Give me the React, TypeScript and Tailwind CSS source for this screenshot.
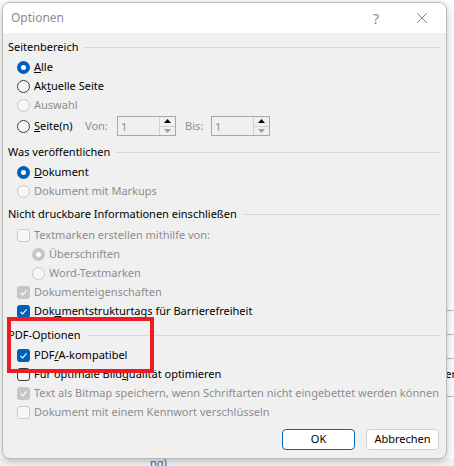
import type React from "react"

const font = { fontFamily: '"Noto Sans", "Open Sans", sans-serif' }

function Check() {
  return (
    <svg viewBox="0 0 13 13" className="h-[13px] w-[13px]">
      <path d="M3.5 6.8 L5.6 8.9 L9.6 4.4" fill="none" stroke="white" strokeWidth="1.1" />
    </svg>
  )
}

function Radio({ checked, disabled }: { checked?: boolean; disabled?: boolean }) {
  if (checked && !disabled)
    return (
      <span className="flex h-[13px] w-[13px] items-center justify-center rounded-full bg-[#005fb8]">
        <span className="h-[5px] w-[5px] rounded-full bg-white" />
      </span>
    )
  if (checked)
    return (
      <span className="flex h-[13px] w-[13px] items-center justify-center rounded-full bg-[#c6c6c6]">
        <span className="h-[5px] w-[5px] rounded-full bg-white" />
      </span>
    )
  return (
    <span
      className={`h-[13px] w-[13px] rounded-full border bg-[#f7f7f7] ${
        disabled ? "border-[#c9c9c9]" : "border-[#3a3a3a]"
      }`}
    />
  )
}

function Box({ checked, disabled }: { checked?: boolean; disabled?: boolean }) {
  if (checked)
    return (
      <span className={`flex h-[13px] w-[13px] rounded-[3px] ${disabled ? "bg-[#c6c6c6]" : "bg-[#005fb8]"}`}>
        <Check />
      </span>
    )
  return (
    <span
      className={`h-[13px] w-[13px] rounded-[3px] border bg-[#f7f7f7] ${
        disabled ? "border-[#c9c9c9]" : "border-[#3a3a3a]"
      }`}
    />
  )
}

function Row({
  kind,
  checked,
  disabled,
  indent,
  children,
}: {
  kind: "radio" | "box"
  checked?: boolean
  disabled?: boolean
  indent?: boolean
  children: React.ReactNode
}) {
  return (
    <div className={`flex h-[19px] items-center gap-[4px] ${indent ? "pl-[24px]" : "pl-[9px]"}`}>
      {kind === "radio" ? <Radio checked={checked} disabled={disabled} /> : <Box checked={checked} disabled={disabled} />}
      <span className={`whitespace-nowrap ${disabled ? "text-[#8d8d8d]" : "text-black"}`}>{children}</span>
    </div>
  )
}

function Group({ title, className }: { title: string; className?: string }) {
  return (
    <div className={`flex h-[18px] items-center ${className ?? ""}`}>
      <span className="whitespace-nowrap text-black">{title}</span>
      <span className="ml-[6px] h-px flex-1 bg-[#d9d9d9]" />
    </div>
  )
}

function Spin() {
  return (
    <div className="flex h-[20px] w-[59px] border border-[#a8a8a8] bg-[#f0f0f0]">
      <span className="flex-1 pl-[3px] pt-[2px] text-[#8d8d8d]">1</span>
      <div className="flex w-[16px] flex-col border-l border-[#d0d0d0]">
        <span className="flex flex-1 items-center justify-center border-b border-[#d0d0d0]">
          <svg viewBox="0 0 7 4" className="h-[4px] w-[7px]">
            <path d="M0 4 L3.5 0 L7 4Z" fill="#000" />
          </svg>
        </span>
        <span className="flex flex-1 items-center justify-center">
          <svg viewBox="0 0 7 4" className="h-[4px] w-[7px]">
            <path d="M0 0 L3.5 4 L7 0Z" fill="#a0a0a0" />
          </svg>
        </span>
      </div>
    </div>
  )
}

export default function App() {
  return (
    <div className="relative h-[466px] w-[454px] overflow-hidden bg-white text-[11px]" style={font}>
      {/* Word window behind */}
      <div className="absolute right-0 top-[310px] h-px w-[10px] bg-[#bdbdbd]" />
      <div className="absolute right-0 top-[334px] h-px w-[10px] bg-[#bdbdbd]" />
      <div className="absolute right-0 top-[358px] h-px w-[10px] bg-[#bdbdbd]" />
      <div className="absolute right-0 top-[396px] h-px w-[10px] bg-[#bdbdbd]" />
      <span className="absolute right-[-2px] top-[366px] text-black">er</span>
      <div className="absolute bottom-0 left-0 h-[8px] w-full bg-[#f3f3f3]" />
      <span className="absolute left-[150px] top-[455px] text-[#2b61b8]">ng)</span>

      <div className="relative pl-[2px] pt-[2px]">
        <div className="flex h-[457px] w-[445px] flex-col overflow-hidden rounded-[8px] border border-[#b9b9b9] bg-[#f0f0f0] shadow-[0_2px_8px_rgba(0,0,0,0.25)]">
          {/* title bar */}
          <div className="flex h-[30px] items-center bg-white pl-[8px]">
            <span className="flex-1 text-[12px] text-[#8c8c8c]">Optionen</span>
            <span className="mr-[38px] text-[14px] text-[#8c8c8c]">?</span>
            <svg viewBox="0 0 10 10" className="mr-[19px] h-[10px] w-[10px]">
              <path d="M0 0 L10 10 M10 0 L0 10" stroke="#8c8c8c" strokeWidth="1" />
            </svg>
          </div>

          <div className="flex flex-1 flex-col pl-[5px] pr-[6px] pt-[5px]">
            <Group title="Seitenbereich" />
            <div className="mt-[2px]">
              <Row kind="radio" checked>
                <u>A</u>lle
              </Row>
              <Row kind="radio">
                Ak<u>t</u>uelle Seite
              </Row>
              <Row kind="radio" disabled>
                Auswahl
              </Row>
              <div className="flex h-[22px] items-center pl-[9px]">
                <Radio />
                <span className="ml-[4px] w-[51px]">
                  <u>S</u>eite(n)
                </span>
                <span className="w-[32px] text-[#8d8d8d]">Von:</span>
                <Spin />
                <span className="ml-[9px] w-[26px] text-[#8d8d8d]">Bis:</span>
                <Spin />
              </div>
            </div>

            <Group title="Was veröffentlichen" className="mt-[6px]" />
            <div className="mt-[2px]">
              <Row kind="radio" checked>
                <u>D</u>okument
              </Row>
              <Row kind="radio" disabled>
                Dokument mit Markups
              </Row>
            </div>

            <Group title="Nicht druckbare Informationen einschließen" className="mt-[4px]" />
            <div className="mt-[3px]">
              <Row kind="box" disabled>
                Textmarken erstellen mithilfe von:
              </Row>
              <Row kind="radio" checked disabled indent>
                Überschriften
              </Row>
              <Row kind="radio" disabled indent>
                Word-Textmarken
              </Row>
              <Row kind="box" checked disabled>
                Dokumenteigenschaften
              </Row>
              <Row kind="box" checked>
                Dok<u>u</u>mentstrukturtags für Barrierefreiheit
              </Row>
            </div>

            <Group title="PDF-Optionen" className="mt-[5px]" />
            <div className="mt-[2px]">
              <Row kind="box" checked>
                PDF<u>/</u>A-kompatibel
              </Row>
              <Row kind="box">
                Für optimale Bild<u>q</u>ualität optimieren
              </Row>
              <Row kind="box" checked disabled>
                Text als Bitmap speichern, wenn Schriftarten nicht eingebettet werden können
              </Row>
              <Row kind="box" disabled>
                Dokument mit einem Kennwort verschlüsseln
              </Row>
            </div>

            <div className="mt-[7px] flex justify-end gap-[11px] pr-[1px]">
              <button className="h-[21px] w-[73px] rounded-[4px] border border-[#0067c0] bg-white text-black">
                OK
              </button>
              <button className="h-[21px] w-[73px] rounded-[4px] border border-[#d0d0d0] bg-white text-black">
                Abbrechen
              </button>
            </div>
          </div>
        </div>
      </div>

      {/* annotation */}
      <div className="absolute left-[7px] top-[317px] h-[56px] w-[147px] border-[4px] border-[#ed1c24]" />
    </div>
  )
}
